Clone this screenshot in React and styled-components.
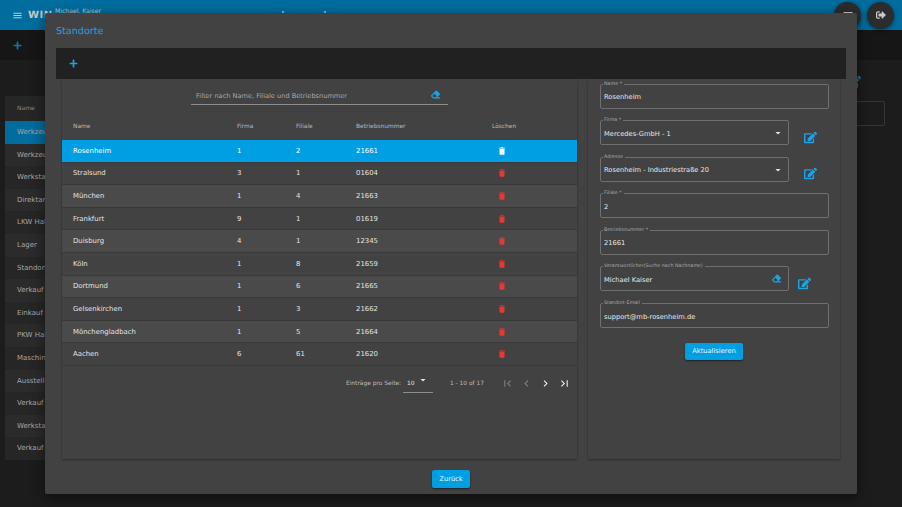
import React from "react";
import styled, { createGlobalStyle } from "styled-components";
import { FaEraser, FaEdit, FaSignOutAlt, FaPlus } from "react-icons/fa";
import { MdMenu, MdFirstPage, MdLastPage, MdChevronLeft, MdChevronRight, MdArrowDropDown, MdDelete } from "react-icons/md";

const GlobalStyle = createGlobalStyle`
  html, body {
    margin: 0;
    padding: 0;
    background: #1c1c1c;
    font-family: "DejaVu Sans", sans-serif;
    text-rendering: geometricPrecision;
    overflow: hidden;
  }
`;

const Page = styled.div`
  position: relative;
  width: 902px;
  height: 507px;
  overflow: hidden;
  background: #1c1c1c;
`;

const TopBar = styled.header`
  height: 30px;
  background: #006d9e;
  display: flex;
  align-items: center;
  padding: 0 8px 0 12px;
  color: #c8c8c8;
`;

const Brand = styled.span`
  width: 22px;
  flex: none;
  font-size: 10px;
  font-weight: 700;
  margin-left: 5px;
  letter-spacing: 0.5px;
`;

const UserName = styled.span`
  width: 60px;
  flex: none;
  font-size: 6.1px;
  margin: 0 0 8px 5px;
  color: #b8c8d0;
`;

const TitleDots = styled.div`
  flex: 1;
  display: flex;
  gap: 40px;
  padding: 0 0 6px 167px;
`;

const TitleDot = styled.i`
  width: 2px;
  height: 3px;
  background: #74b4d2;
`;

const RoundButton = styled.div`
  width: 27px;
  height: 27px;
  margin-left: 6px;
  border-radius: 50%;
  background: #2c2c2c;
  color: #c8c8c8;
  display: flex;
  align-items: center;
  justify-content: center;
  box-shadow: 0 1px 4px rgba(0, 0, 0, 0.5);
`;

const BackToolbar = styled.div`
  height: 30px;
  background: #161616;
  color: #0c78ab;
  display: flex;
  align-items: center;
  padding-left: 13px;
`;

const BackContent = styled.div`
  display: flex;
  justify-content: space-between;
  padding: 36px 17px 0 5px;
`;

const BackTable = styled.div`
  width: 300px;
  background: #262626;
`;

const BackHead = styled.div`
  height: 25px;
  line-height: 25px;
  padding-left: 12px;
  font-size: 6px;
  color: #8a8a8a;
`;

const BackRow = styled.div`
  height: 22.6px;
  line-height: 23px;
  padding-left: 12px;
  font-size: 7px;
  color: #a8a8a8;
  background: ${(p) => (p.$active ? "#006d9e" : p.$odd ? "#2b2b2b" : "#262626")};
`;

const BackSide = styled.div`
  width: 60px;
  margin-top: -21px;
  display: flex;
  flex-direction: column;
  align-items: flex-end;
`;

const BackEdit = styled.span`
  display: flex;
  height: 14px;
  margin: 0 24px 12px 0;
  font-size: 14px;
  color: #0c78ab;
`;

const BackBox = styled.div`
  width: 40px;
  height: 25px;
  box-sizing: border-box;
  border: 1px solid #363636;
  border-radius: 2px;
`;

const Modal = styled.section`
  position: absolute;
  left: 45px;
  top: 13px;
  width: 812px;
  height: 481px;
  box-sizing: border-box;
  padding: 0 11px;
  background: #424242;
  border-radius: 2px;
  box-shadow: 0 4px 14px rgba(0, 0, 0, 0.5);
  display: flex;
  flex-direction: column;
`;

const ModalTitle = styled.h2`
  margin: 0;
  height: 35px;
  line-height: 37px;
  font-size: 9.6px;
  font-weight: 400;
  color: #2ba0d8;
`;

const ModalToolbar = styled.div`
  height: 31px;
  flex: none;
  background: #212121;
  color: #1ba3e6;
  display: flex;
  align-items: center;
  padding-left: 13px;
`;

const Panels = styled.div`
  display: flex;
  height: 380px;
  padding: 0 6px 0 6px;
`;

const Panel = styled.div`
  background: #424242;
  box-shadow: 0 1px 2px rgba(0, 0, 0, 0.35);
`;

const ListPanel = styled(Panel)`
  width: 515px;
  margin-right: 11px;
  display: flex;
  flex-direction: column;
`;

const FormPanel = styled(Panel)`
  width: 252px;
  box-sizing: border-box;
  padding: 2.5px 11px 0 12px;
`;

const FilterRow = styled.div`
  width: 257px;
  height: 26px;
  margin: 0 0 0 129px;
  box-sizing: border-box;
  border-bottom: 1px solid #8e8e8e;
  display: flex;
  align-items: center;
  justify-content: space-between;
  padding: 8px 8px 0 5px;
  font-size: 6.6px;
  color: #a9a9a9;
  svg {
    color: #1ba3e6;
    font-size: 9px;
    margin-top: -2px;
  }
`;

const Grid = `
  display: grid;
  grid-template-columns: 164px 59px 60px 136px 1fr;
  padding-left: 11px;
  align-items: center;
`;

const HeadRow = styled.div`
  ${Grid}
  height: 35px;
  box-sizing: border-box;
  padding-top: 8px;
  font-size: 5.9px;
  color: #b9b9b9;
`;

const Row = styled.div`
  ${Grid}
  height: 22.6px;
  box-sizing: border-box;
  border-bottom: 1px solid #3a3a3a;
  font-size: 6.9px;
  color: ${(p) => (p.$selected ? "#ffffff" : "#e4e4e4")};
  background: ${(p) => (p.$selected ? "#009fe3" : p.$odd ? "#4a4a4a" : "#424242")};
`;

const TrashCell = styled.span`
  display: flex;
  padding-left: 5px;
  font-size: 10px;
  color: ${(p) => (p.$selected ? "#ffffff" : "#e53935")};
`;

const Pagination = styled.div`
  display: flex;
  align-items: center;
  height: 36px;
  padding-left: 284px;
  font-size: 5.9px;
  white-space: nowrap;
  color: #bdbdbd;
`;

const PageSizeLabel = styled.span`
  width: 53px;
  flex: none;
`;

const PageSize = styled.div`
  width: 30px;
  height: 18px;
  flex: none;
  margin-left: 4px;
  box-sizing: border-box;
  border-bottom: 1px solid #8e8e8e;
  display: flex;
  align-items: center;
  justify-content: space-between;
  padding: 2px 4px 0 4px;
  color: #e4e4e4;
  svg {
    font-size: 12px;
    margin: -8px 0 0 0;
  }
`;

const PageRange = styled.span`
  width: 50.5px;
  flex: none;
  margin: 0 0 0 17px;
`;

const PageIcons = styled.div`
  display: flex;
  gap: 6px;
`;

const PageIcon = styled.span`
  display: flex;
  font-size: 13px;
  color: ${(p) => (p.$off ? "#808080" : "#f0f0f0")};
`;

const FieldRow = styled.div`
  display: flex;
  align-items: center;
  margin-bottom: 9.6px;
`;

const Field = styled.fieldset`
  margin: 0;
  padding: 0 3px;
  width: ${(p) => (p.$short ? "189px" : "229px")};
  height: 27px;
  box-sizing: border-box;
  border: 1px solid #6f6f6f;
  border-radius: 2px;
  position: relative;
  display: flex;
  align-items: center;
  justify-content: space-between;
  font-size: 6.7px;
  color: #e8e8e8;
`;

const FieldLabel = styled.legend`
  padding: 0 2px 0 1px;
  margin-left: -1px;
  font-size: 4.8px;
  line-height: 5px;
  color: #a9a9a9;
`;

const FieldValue = styled.span`
  flex: 1;
  margin-top: 0;
`;

const FieldEnd = styled.span`
  display: flex;
  margin: ${(p) => (p.$accent ? "-3px 4px 0 0" : "-1px 1px 0 0")};
  color: ${(p) => (p.$accent ? "#1ba3e6" : "#e8e8e8")};
  font-size: ${(p) => (p.$accent ? "9px" : "12px")};
`;

const EditLink = styled.span`
  display: flex;
  margin-left: ${(p) => (p.$near ? "9px" : "15px")};
  margin-top: 11px;
  font-size: 13px;
  color: #1ba3e6;
`;

const Action = styled.button`
  display: block;
  border: 0;
  border-radius: 2px;
  padding: 0;
  width: ${(p) => p.$w}px;
  height: 17.5px;
  font: inherit;
  font-size: 6.7px;
  color: #eaf7fd;
  background: #009fe3;
  box-shadow: 0 1px 2px rgba(0, 0, 0, 0.5);
`;

const FormAction = styled(Action)`
  margin: 14.5px 0 0 85px;
`;

const ModalFooter = styled.div`
  display: flex;
  justify-content: center;
  padding-top: 11px;
`;

const backRows = ["Werkzeug", "Werkzeug", "Werkstatt", "Direktannahme", "LKW Halle", "Lager", "Standort", "Verkauf", "Einkauf", "PKW Halle", "Maschinen", "Ausstellung", "Verkauf", "Werkstatt", "Verkauf"];

const locations = [
  ["Rosenheim", "1", "2", "21661"],
  ["Stralsund", "3", "1", "01604"],
  ["München", "1", "4", "21663"],
  ["Frankfurt", "9", "1", "01619"],
  ["Duisburg", "4", "1", "12345"],
  ["Köln", "1", "8", "21659"],
  ["Dortmund", "1", "6", "21665"],
  ["Gelsenkirchen", "1", "3", "21662"],
  ["Mönchengladbach", "1", "5", "21664"],
  ["Aachen", "6", "61", "21620"],
];

const FormField = ({ label, value, short, end, accent }) => (
  <Field $short={short}>
    <FieldLabel>{label}</FieldLabel>
    <FieldValue>{value}</FieldValue>
    {end && <FieldEnd $accent={accent}>{end}</FieldEnd>}
  </Field>
);

export default function App() {
  return (
    <Page>
      <GlobalStyle />
      <TopBar>
        <MdMenu size={11} />
        <Brand>WIN</Brand>
        <UserName>Michael. Kaiser</UserName>
        <TitleDots><TitleDot /><TitleDot /></TitleDots>
        <RoundButton><MdMenu size={12} /></RoundButton>
        <RoundButton><FaSignOutAlt size={10} /></RoundButton>
      </TopBar>
      <BackToolbar><FaPlus size={9} /></BackToolbar>
      <BackContent>
        <BackTable>
          <BackHead>Name</BackHead>
          {backRows.map((name, i) => (
            <BackRow key={i} $active={i === 0} $odd={i % 2 === 1}>{name}</BackRow>
          ))}
        </BackTable>
        <BackSide>
          <BackEdit><FaEdit /></BackEdit>
          <BackBox />
        </BackSide>
      </BackContent>

      <Modal>
        <ModalTitle>Standorte</ModalTitle>
        <ModalToolbar><FaPlus size={9} /></ModalToolbar>
        <Panels>
          <ListPanel>
            <FilterRow>
              <span>Filter nach Name, Filiale und Betriebsnummer</span>
              <FaEraser />
            </FilterRow>
            <HeadRow>
              <span>Name</span><span>Firma</span><span>Filiale</span><span>Betriebsnummer</span><span>Löschen</span>
            </HeadRow>
            {locations.map((row, i) => (
              <Row key={row[0]} $selected={i === 0} $odd={i % 2 === 0}>
                {row.map((cell, c) => <span key={c}>{cell}</span>)}
                <TrashCell $selected={i === 0}><MdDelete /></TrashCell>
              </Row>
            ))}
            <Pagination>
              <PageSizeLabel>Einträge pro Seite:</PageSizeLabel>
              <PageSize>10<MdArrowDropDown /></PageSize>
              <PageRange>1 - 10 of 17</PageRange>
              <PageIcons>
                <PageIcon $off><MdFirstPage /></PageIcon>
                <PageIcon $off><MdChevronLeft /></PageIcon>
                <PageIcon><MdChevronRight /></PageIcon>
                <PageIcon><MdLastPage /></PageIcon>
              </PageIcons>
            </Pagination>
          </ListPanel>
          <FormPanel>
            <FieldRow><FormField label="Name *" value="Rosenheim" /></FieldRow>
            <FieldRow>
              <FormField short label="Firma *" value="Mercedes-GmbH - 1" end={<MdArrowDropDown />} />
              <EditLink><FaEdit /></EditLink>
            </FieldRow>
            <FieldRow>
              <FormField short label="Adresse" value="Rosenheim - Industriestraße 20" end={<MdArrowDropDown />} />
              <EditLink><FaEdit /></EditLink>
            </FieldRow>
            <FieldRow><FormField label="Filiale *" value="2" /></FieldRow>
            <FieldRow><FormField label="Betriebsnummer *" value="21661" /></FieldRow>
            <FieldRow>
              <FormField short accent label="Verantwortlicher(Suche nach Nachname)" value="Michael Kaiser" end={<FaEraser />} />
              <EditLink $near><FaEdit /></EditLink>
            </FieldRow>
            <FieldRow><FormField label="Standort-Email" value="support@mb-rosenheim.de" /></FieldRow>
            <FormAction $w={58}>Aktualisieren</FormAction>
          </FormPanel>
        </Panels>
        <ModalFooter><Action $w={38}>Zurück</Action></ModalFooter>
      </Modal>
    </Page>
  );
}
